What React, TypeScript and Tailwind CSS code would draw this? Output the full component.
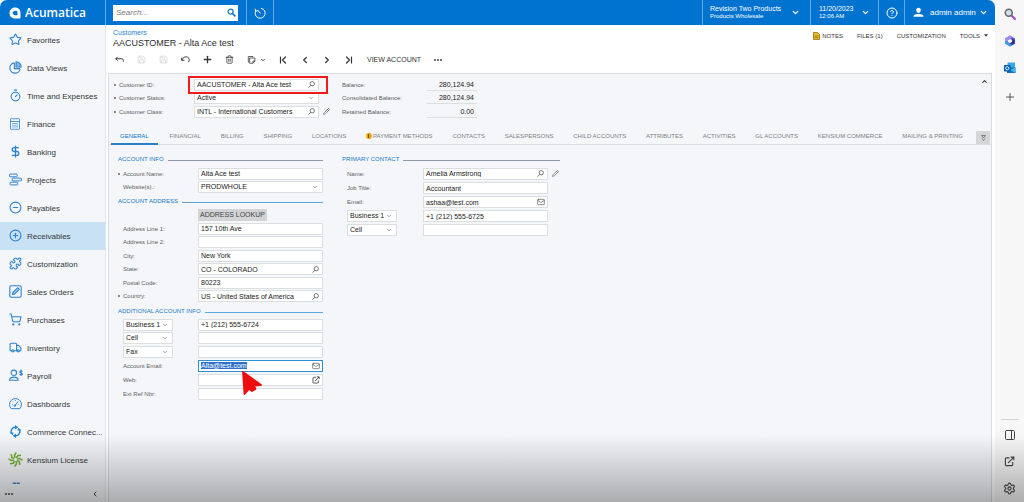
import { useEffect, useRef, type ReactNode } from 'react';
import {
  CircleMinus,
  CirclePlus,
  ChevronDown,
  ChevronLeft,
  ChevronRight,
  ChevronUp,
  ChevronFirst,
  ChevronLast,
  CircleHelp,
  DollarSign,
  Mail,
  PanelRight,
  Pencil,
  Plus,
  Puzzle,
  Save,
  Settings,
  ShoppingCart,
  Star,
  Timer,
  Trash2,
  Truck,
} from 'lucide-react';

function ProjectsIcon() {
  return (
    <svg viewBox="0 0 24 24" className="size-[13px]" fill="none" stroke="currentColor" strokeWidth="1.800">
      <rect x="1" y="2" width="14" height="5" rx="1" />
      <rect x="6" y="9.500" width="17" height="5" rx="1" />
      <rect x="2" y="17" width="14" height="5" rx="1" />
    </svg>
  );
}

function PieIcon() {
  return (
    <svg viewBox="0 0 24 24" className="size-[13px]" fill="none" stroke="currentColor" strokeWidth="2">
      <path d="M10 3.500a9.500 9.500 0 1 0 10.500 11" />
      <path d="M13 1.500a9.500 9.500 0 0 1 9.500 9.500H13z" fill="currentColor" fillOpacity=".55" />
      <path d="M10 3.500V14h10.500" />
    </svg>
  );
}

function SalesIcon() {
  return (
    <svg viewBox="0 0 24 24" className="size-[13px]" fill="none" stroke="currentColor" strokeWidth="2">
      <rect x="1.500" y="1.500" width="21" height="21" rx="2.500" />
      <path d="M6.500 17.500l1-4L16 5l3 3-8.500 8.500z" fill="currentColor" fillOpacity=".35" />
    </svg>
  );
}

function DashboardIcon() {
  return (
    <svg viewBox="0 0 24 24" className="size-[13px]" fill="none" stroke="currentColor" strokeWidth="1.800">
      <path d="M4 21.500a11 11 0 1 1 16 0z" />
      <path d="M10.500 16.500L17 8M5.500 14h1.500M7.500 8.500l1 1M12 6v1.500M17.500 14H19" />
      <circle cx="10.800" cy="16" r="1.500" />
    </svg>
  );
}

function PayrollIcon() {
  return (
    <svg viewBox="0 0 26 24" className="h-[13px] w-[14px]" fill="none" stroke="currentColor" strokeWidth="1.900">
      <circle cx="9" cy="7" r="5" />
      <path d="M1 21c0-4 3-6 8-6s8 2 8 6z" />
      <path d="M25 4.500c-1-1.200-5-1.500-5 .8 0 2.500 5 1.300 5 4 0 2.200-4 2.200-5.300.7M22.500 1v12" />
    </svg>
  );
}

function SyncIcon() {
  return (
    <svg viewBox="0 0 24 24" className="size-[13px] text-[#1f82d6]" fill="none" stroke="currentColor" strokeWidth="2.600">
      <path d="M4.500 15.500A8.300 8.300 0 0 1 12 4" />
      <path d="M19.500 8.500A8.300 8.300 0 0 1 12 20" />
      <path d="M11 0l6 4-6 4.500zM13 24l-6-4 6-4.500z" fill="currentColor" stroke="none" />
      <path d="M1.500 14h7l-2 5zM22.500 10h-7l2-5z" fill="currentColor" stroke="none" />
    </svg>
  );
}

function KensiumIcon() {
  const blades = [0, 45, 90, 135, 180, 225, 270, 315];
  return (
    <svg viewBox="0 0 28 28" className="-ml-px size-[15px] text-[#6fae2d]" fill="none" stroke="currentColor" strokeWidth="2.800">
      {blades.map((angle) => (
        <path key={angle} d="M13 11l-1-5 3.500-5" transform={`rotate(${angle} 14 14)`} />
      ))}
    </svg>
  );
}

function BarIcon() {
  return (
    <svg viewBox="0 0 24 24" className="size-[13px]" fill="currentColor">
      <path d="M7 10h6v3H7zM14 10h6v3h-6z" />
    </svg>
  );
}

function FinanceIcon() {
  return (
    <svg viewBox="0 0 24 24" className="size-[12px]" fill="none" stroke="currentColor" strokeWidth="1.600">
      <rect x="3" y="1.500" width="18" height="21" rx="1" />
      <path d="M3 7h18" />
      <path d="M8 10v10M12 10v10M16 10v10" strokeDasharray="2 1.600" strokeWidth="2.200" />
    </svg>
  );
}

function Logo() {
  return (
    <svg viewBox="0 0 24 24" className="size-[12px]" aria-hidden="true">
      <path
        fill="#fff"
        fillRule="evenodd"
        d="M12 1c7 0 11 4.500 11 11v9c0 1.500-.6 2-2 2h-9C5 23 1 18 1 12S5.500 1 12 1zm1 6.500c-3.600 0-5.500 2-5.500 4.500s1.800 4.500 4.500 4.500h5V11c0-2.300-1.300-3.500-4-3.500z"
      />
    </svg>
  );
}

const ic = 'size-[13px]';
const navItems: { label: string; icon: ReactNode }[] = [
  { label: 'Favorites', icon: <Star className={ic} strokeWidth={2} /> },
  { label: 'Data Views', icon: <PieIcon /> },
  { label: 'Time and Expenses', icon: <Timer className={ic} strokeWidth={2} /> },
  { label: 'Finance', icon: <FinanceIcon /> },
  { label: 'Banking', icon: <DollarSign className={ic} strokeWidth={2.4} /> },
  { label: 'Projects', icon: <ProjectsIcon /> },
  { label: 'Payables', icon: <CircleMinus className={ic} strokeWidth={2} /> },
  { label: 'Receivables', icon: <CirclePlus className={ic} strokeWidth={2} /> },
  { label: 'Customization', icon: <Puzzle className={ic} strokeWidth={2} /> },
  { label: 'Sales Orders', icon: <SalesIcon /> },
  { label: 'Purchases', icon: <ShoppingCart className={ic} strokeWidth={2} /> },
  { label: 'Inventory', icon: <Truck className={ic} strokeWidth={2} /> },
  { label: 'Payroll', icon: <PayrollIcon /> },
  { label: 'Dashboards', icon: <DashboardIcon /> },
  { label: 'Commerce Connec...', icon: <SyncIcon /> },
  { label: 'Kensium License', icon: <KensiumIcon /> },
];

const tabs = [
  'GENERAL',
  'FINANCIAL',
  'BILLING',
  'SHIPPING',
  'LOCATIONS',
  'PAYMENT METHODS',
  'CONTACTS',
  'SALESPERSONS',
  'CHILD ACCOUNTS',
  'ATTRIBUTES',
  'ACTIVITIES',
  'GL ACCOUNTS',
  'KENSIUM COMMERCE',
  'MAILING & PRINTING',
];

function Lookup() {
  return (
    <svg viewBox="0 0 14 14" className="mr-px size-[7px] shrink-0" fill="none" stroke="#555" strokeWidth="1.600">
      <circle cx="8.500" cy="5.500" r="4.300" />
      <path d="M5.500 8.800L1 13.300" />
    </svg>
  );
}

function OpenIcon({ className }: { className: string }) {
  return (
    <svg viewBox="0 0 24 24" className={className} fill="none" stroke="currentColor" strokeWidth="2.400">
      <path d="M12 4H5a2 2 0 0 0-2 2v13a2 2 0 0 0 2 2h12a2 2 0 0 0 2-2v-6" />
      <path d="M9 15L21 3M14.500 2.500h7v7" />
    </svg>
  );
}

function TextBox({ id, value = '', icon, label }: { id: string; value?: string; icon?: ReactNode; label?: string }) {
  return (
    <div className="flex h-[12px] w-[125px] items-center border border-[#dcdfe2] bg-white pr-[2px] focus-within:border-[#2f8fd3]">
      <input
        id={id}
        aria-label={label}
        defaultValue={value}
        className="h-full min-w-0 flex-1 bg-transparent pl-[2px] text-[7px] leading-[10px] text-[#222] outline-none"
      />
      {icon}
    </div>
  );
}

function DropDown({ id, value, narrow, label }: { id: string; value: string; narrow?: boolean; label?: string }) {
  return (
    <div className={`grid h-[12px] items-center border border-[#dcdfe2] bg-white ${narrow ? 'w-[50px]' : 'w-[125px]'}`}>
      <select
        id={id}
        aria-label={label}
        className="col-start-1 row-start-1 h-[10px] w-full appearance-none bg-transparent pl-[2px] text-[7px] leading-[10px] text-[#222] outline-none"
      >
        <option>{value}</option>
      </select>
      <ChevronDown
        className="pointer-events-none col-start-1 row-start-1 mr-[4px] size-[6px] justify-self-end text-[#666]"
        strokeWidth={2.5}
      />
    </div>
  );
}

function Label({ id, text, required, wide }: { id: string; text: string; required?: boolean; wide?: boolean }) {
  return (
    <label
      htmlFor={id}
      className={`flex shrink-0 items-center whitespace-nowrap text-[#5c6064] ${wide ? 'w-[81px]' : 'w-[80px]'}`}
    >
      <span className="w-[5px] shrink-0">
        {required && <span className="block size-[2px] rounded-full bg-[#666]" />}
      </span>
      {text}
    </label>
  );
}

function Row({ children, even }: { children: ReactNode; even?: boolean }) {
  return (
    <div className={`flex items-center ${even ? 'h-[14px] first:h-[15px]' : 'h-[13px] even:h-[14px]'}`}>{children}</div>
  );
}

function Heading({ text, grey }: { text: string; grey?: boolean }) {
  return (
    <h2 className="flex h-[13px] items-center gap-[4px] whitespace-nowrap text-[#1779c9]">
      {text}
      <span className={`mt-[3px] h-px flex-1 ${grey ? 'bg-[#8f9aa5]' : 'bg-[#5aa7dd]'}`} />
    </h2>
  );
}

function Tool({ label, children }: { label: string; children: ReactNode }) {
  return (
    <button aria-label={label} className="flex w-[22px] items-center justify-center">
      {children}
    </button>
  );
}

function Dots() {
  return (
    <>
      <span className="size-[2px] rounded-full bg-[#444]" />
      <span className="size-[2px] rounded-full bg-[#444]" />
      <span className="size-[2px] rounded-full bg-[#444]" />
    </>
  );
}

function Header() {
  return (
    <header className="flex h-[25px] shrink-0 items-stretch rounded-t-[7px] bg-[#0073d1] text-white">
      <a href="#home" className="flex w-[106px] items-center gap-[4px] border-r border-[#62aae4] pl-[9px]">
        <Logo />
        <span className="font-['Open_Sans'] text-[12px] leading-none font-semibold">Acumatica</span>
      </a>
      <div className="flex w-[141px] items-center border-r border-[#62aae4] pl-[7px]">
        <div className="flex h-[16px] w-[125px] items-center bg-white pr-[2px]">
          <input
            aria-label="Search"
            placeholder="Search..."
            className="min-w-0 flex-1 pl-[3px] text-[8px] text-[#333] italic outline-none placeholder:text-[#777]"
          />
          <svg viewBox="0 0 20 20" className="size-[9px]" fill="none" stroke="#1b78cc">
            <circle cx="8" cy="8" r="5.500" strokeWidth="2.800" />
            <path d="M12 12l6.500 6.500" strokeWidth="4" />
          </svg>
        </div>
      </div>
      <button aria-label="Recent" className="flex w-[27px] items-center justify-center border-r border-[#62aae4]">
        <svg viewBox="0 0 24 24" className="size-[12px]" fill="none" stroke="currentColor" strokeWidth="2">
          <path d="M14 2.500A10 10 0 1 1 3.500 7.500" />
          <path d="M13 13L8 7" />
          <path d="M2 3.500l1.500 5 5-1.500" />
        </svg>
      </button>
      <div className="flex-1" />
      <button className="flex w-[108px] items-center justify-between border-l border-[#62aae4] pr-[10px] pl-[7px] text-left">
        <span>
          <span className="block text-[7px] leading-[8px]">Revision Two Products</span>
          <span className="block text-[6px] leading-[7px]">Products Wholesale</span>
        </span>
        <ChevronDown className="size-[9px]" strokeWidth={3.5} />
      </button>
      <button className="flex w-[68px] items-center justify-between border-l border-[#62aae4] pr-[8px] pl-[8px] text-left">
        <span>
          <span className="block text-[7px] leading-[8px]">11/20/2023</span>
          <span className="block text-[6px] leading-[7px]">12:06 AM</span>
        </span>
        <ChevronDown className="size-[9px]" strokeWidth={3.5} />
      </button>
      <button aria-label="Help" className="flex w-[27px] items-center justify-center border-x border-[#62aae4]">
        <CircleHelp className="size-[12px]" strokeWidth={2} />
      </button>
      <button className="flex w-[90px] items-center pl-[8px] text-[8px]">
        <svg viewBox="0 0 24 24" className="size-[11px]" fill="currentColor">
          <path d="M12 1.500c3.500 0 5 2.300 5 5.200 0 3.300-2 6.300-5 6.300S7 10 7 6.700c0-2.900 1.500-5.200 5-5.200z" />
          <path d="M1 21.500c0-4 2-5.500 8-6.500h6c6 1 8 2.500 8 6.500z" />
        </svg>
        <span className="ml-[6px] flex-1 text-left whitespace-nowrap">admin admin</span>
        <ChevronDown className="mr-[7px] size-[9px]" strokeWidth={3.5} />
      </button>
    </header>
  );
}

function Nav() {
  return (
    <nav className="flex w-[105px] shrink-0 flex-col bg-[#f4f6f9]">
      <ul className="min-h-0 flex-1 overflow-hidden pt-px">
        {navItems.map(({ label, icon }) => (
          <li key={label}>
            <a
              href="#module"
              className={`flex h-[28px] items-center pl-[9px] text-[8px] text-[#33363a] ${
                label === 'Receivables' ? 'bg-[#c8e1f5]' : ''
              }`}
            >
              <span className="flex w-[18px] shrink-0 pb-px text-[#2a82d0]">{icon}</span>
              <span className="pt-[2px] whitespace-nowrap">{label}</span>
            </a>
          </li>
        ))}
        <li className="flex h-[28px] items-start pt-[3px] pl-[9px] text-[#3388d2]">
          <BarIcon />
        </li>
      </ul>
      <div className="flex h-[17px] shrink-0 items-center justify-between pr-[6px] pl-[5px] text-[#444]">
        <button aria-label="More items" className="flex gap-px">
          <Dots />
        </button>
        <button aria-label="Collapse menu">
          <ChevronLeft className="size-[8px]" strokeWidth={3} />
        </button>
      </div>
    </nav>
  );
}

function TitleBar() {
  return (
    <div className="flex h-[48px] shrink-0 justify-between bg-white text-[#333]">
      <div>
        <div className="pl-[7px]">
          <a href="#customers" className="block pt-[4px] text-[7px] leading-[8px] text-[#2a86cf]">
            Customers
          </a>
          <h1 className="text-[9px] leading-[13px] whitespace-nowrap text-[#2b2d30]">AACUSTOMER - Alta Ace test</h1>
        </div>
        <div className="flex h-[19px] items-center pl-[2px]">
          <Tool label="Back">
            <svg viewBox="0 0 24 24" className="size-[9px]" fill="none" stroke="currentColor" strokeWidth="2.600">
              <path d="M7 5L2 10l5 5M2 10h16c3 0 4 1.500 4 4v4" />
            </svg>
          </Tool>
          <Tool label="Save and close">
            <Save className="size-[9px] text-[#d3d3d3]" strokeWidth={2} />
          </Tool>
          <Tool label="Save">
            <Save className="size-[9px] text-[#d3d3d3]" strokeWidth={2} />
          </Tool>
          <Tool label="Undo">
            <svg viewBox="0 0 24 24" className="size-[9px]" fill="none" stroke="currentColor" strokeWidth="2.600">
              <path d="M2 7v7h7" />
              <path d="M2 14C5 6 12 3 18 6c5 3 5 9 2 13" />
            </svg>
          </Tool>
          <Tool label="Add">
            <Plus className="size-[11px]" strokeWidth={2.8} />
          </Tool>
          <Tool label="Delete">
            <Trash2 className="size-[9px]" strokeWidth={2} />
          </Tool>
          <button aria-label="Copy" className="flex w-[32px] items-center gap-[4px] pl-[7px]">
            <svg viewBox="0 0 24 24" className="size-[9px]" fill="none" stroke="currentColor" strokeWidth="2">
              <path d="M6 19H3.500V4H16v2" />
              <path d="M7 8h14v8l-5 6H7z" />
              <path d="M21 16h-5v6" />
            </svg>
            <ChevronDown className="size-[6px]" strokeWidth={3.5} />
          </button>
          <Tool label="First">
            <ChevronFirst className="size-[12px]" strokeWidth={2.4} />
          </Tool>
          <Tool label="Previous">
            <ChevronLeft className="size-[10px]" strokeWidth={3} />
          </Tool>
          <Tool label="Next">
            <ChevronRight className="size-[10px]" strokeWidth={3} />
          </Tool>
          <Tool label="Last">
            <ChevronLast className="size-[12px]" strokeWidth={2.4} />
          </Tool>
          <button className="ml-[7px] text-[7px] whitespace-nowrap">VIEW ACCOUNT</button>
          <button aria-label="More actions" className="ml-[13px] flex gap-px">
            <Dots />
          </button>
        </div>
      </div>
      <div className="flex h-[21px] items-center gap-[14px] pr-[7px] text-[6px] whitespace-nowrap">
        <button className="flex items-center gap-[2px]">
          <svg viewBox="0 0 14 16" className="h-[8px] w-[7px]">
            <path d="M1 1h8l4 4v10H1z" fill="#f0b81c" stroke="#8a6d1a" strokeWidth="1.500" />
            <path d="M3 8h8M3 11h8" stroke="#8a6d1a" strokeWidth="1.300" />
          </svg>
          NOTES
        </button>
        <button>FILES (1)</button>
        <button>CUSTOMIZATION</button>
        <button className="flex items-center gap-[4px]">
          TOOLS
          <svg viewBox="0 0 6 4" className="h-[3px] w-[4px]">
            <path d="M0 0h6L3 4z" fill="#333" />
          </svg>
        </button>
      </div>
    </div>
  );
}

function Summary() {
  return (
    <div className="flex items-start pt-[4px] pl-[5px]">
      <div className="flex flex-col">
        <Row>
          <Label id="customer-id" text="Customer ID:" required />
          <div className="relative">
            <TextBox id="customer-id" value="AACUSTOMER - Alta Ace test" icon={<Lookup />} />
            <div className="pointer-events-none absolute -inset-y-[3px] -right-[9px] -left-[6px] border-2 border-[#ee1c1c]" />
          </div>
        </Row>
        <Row>
          <Label id="customer-status" text="Customer Status:" required />
          <DropDown id="customer-status" value="Active" />
        </Row>
        <Row>
          <Label id="customer-class" text="Customer Class:" required />
          <TextBox id="customer-class" value="INTL - International Customers" icon={<Lookup />} />
          <button aria-label="Edit customer class" className="ml-[4px]">
            <Pencil className="size-[7px] text-[#666]" strokeWidth={2.4} />
          </button>
        </Row>
      </div>
      <dl className="ml-[12px] text-[#5c6064]">
        {[
          ['Balance:', '280,124.94'],
          ['Consolidated Balance:', '280,124.94'],
          ['Retained Balance:', '0.00'],
        ].map(([name, amount]) => (
          <Row key={name}>
            <dt className="w-[85px] whitespace-nowrap">{name}</dt>
            <dd className="h-[12px] w-[50px] border-b border-[#dcdfe2] pr-[3px] text-right text-[7px] leading-[12px] text-[#222]">
              {amount}
            </dd>
          </Row>
        ))}
      </dl>
      <button aria-label="Collapse summary" className="mr-[3px] ml-auto">
        <ChevronUp className="size-[7px] text-[#333]" strokeWidth={3.5} />
      </button>
    </div>
  );
}

function Tabs() {
  return (
    <div className="mt-[9px] flex h-[18px] shrink-0 items-stretch border-b border-[#d9dde1] pl-[2px]">
      <div role="tablist" className="flex flex-1 justify-between">
        {tabs.map((tab, i) => (
          <button
            key={tab}
            role="tab"
            aria-selected={i === 0}
            className={`-mb-px flex items-center border-b-2 whitespace-nowrap ${
              i === 0 ? '-mr-[8px] border-[#2a7fc4] px-[9px] pt-px text-[#0f76c8]' : 'border-transparent pt-px text-[#7d8186]'
            }`}
          >
            {tab === 'PAYMENT METHODS' && (
              <span className="mr-px flex size-[6px] items-center justify-center rounded-full bg-[#f5a800]">
                <span className="h-[4px] w-px bg-[#6b4a00]" />
              </span>
            )}
            {tab}
          </button>
        ))}
      </div>
      <button
        aria-label="Filter tabs"
        className="mt-[4px] mr-px ml-[13px] flex w-[14px] items-center justify-center bg-[#d4d6d8] text-[#666]"
      >
        <svg viewBox="0 0 10 12" className="h-[6px] w-[5px]" fill="none" stroke="currentColor" strokeWidth="1.600">
          <path d="M1 1h8L5 6zM2 7l3 4 3-4" />
        </svg>
      </button>
    </div>
  );
}

function Cursor() {
  return (
    <svg viewBox="0 0 22 26" className="pointer-events-none absolute top-[10px] left-[43px] z-10 h-[26px] w-[22px]">
      <path
        d="M2 2L20 15L13 15.500L14.500 19L11 21L8 19L3.500 24Z"
        fill="#ee0e0e"
        stroke="#ee0e0e"
        strokeWidth="1.800"
        strokeLinejoin="round"
      />
    </svg>
  );
}

function General() {
  const emailBox = useRef<HTMLDivElement>(null);
  useEffect(() => {
    const input = emailBox.current?.querySelector('input');
    input?.focus();
    input?.select();
  }, []);
  return (
    <div className="flex flex-1 items-start gap-[19px] pt-[7px] pl-[9px]">
      <div className="w-[205px]">
        <Heading text="ACCOUNT INFO" grey />
        <div className="pt-[2px]">
          <Row>
            <Label id="account-name" text="Account Name:" required />
            <TextBox id="account-name" value="Alta Ace test" />
          </Row>
          <Row>
            <Label id="website" text="Website(s).:" />
            <DropDown id="website" value="PRODWHOLE" />
          </Row>
        </div>
        <Heading text="ACCOUNT ADDRESS" />
        <button className="mt-[2px] mb-px ml-[80px] block h-[12px] bg-[#d3d4d6] px-[2px] text-[7px] leading-[12px] text-[#444]">
          ADDRESS LOOKUP
        </button>
        <div>
          <Row>
            <Label id="line-1" text="Address Line 1:" />
            <TextBox id="line-1" value="157 10th Ave" />
          </Row>
          <Row>
            <Label id="line-2" text="Address Line 2:" />
            <TextBox id="line-2" />
          </Row>
          <Row>
            <Label id="city" text="City:" />
            <TextBox id="city" value="New York" />
          </Row>
          <Row>
            <Label id="state" text="State:" />
            <TextBox id="state" value="CO - COLORADO" icon={<Lookup />} />
          </Row>
          <Row>
            <Label id="postal" text="Postal Code:" />
            <TextBox id="postal" value="80223" />
          </Row>
          <Row>
            <Label id="country" text="Country:" required />
            <TextBox id="country" value="US - United States of America" icon={<Lookup />} />
          </Row>
        </div>
        <div className="pt-px">
          <Heading text="ADDITIONAL ACCOUNT INFO" />
        </div>
        <div className="pt-px">
          {[
            ['Business 1', '+1 (212) 555-6724'],
            ['Cell', ''],
            ['Fax', ''],
          ].map(([kind, phone]) => (
            <Row key={kind}>
              <div className="w-[80px] pl-[5px]">
                <DropDown id={`account-${kind}`} value={kind} label={`${kind} phone type`} narrow />
              </div>
              <TextBox id={`account-${kind}-number`} value={phone} label={`${kind} number`} />
            </Row>
          ))}
        </div>
        <div>
          <Row even>
            <Label id="account-email" text="Account Email:" />
            <div ref={emailBox} className="relative selection:bg-[#2f6fcb] selection:text-white">
              <TextBox
                id="account-email"
                value="Alta@test.com"
                icon={<Mail className="size-[8px] text-[#555]" strokeWidth={2} />}
              />
              <Cursor />
            </div>
          </Row>
          <Row even>
            <Label id="web" text="Web:" />
            <TextBox id="web" icon={<OpenIcon className="size-[8px] text-[#333]" />} />
          </Row>
          <Row even>
            <Label id="ext-ref" text="Ext Ref Nbr:" />
            <TextBox id="ext-ref" />
          </Row>
        </div>
      </div>
      <div className="w-[218px]">
        <Heading text="PRIMARY CONTACT" grey />
        <div className="pt-px">
          <Row even>
            <Label id="contact-name" text="Name:" wide />
            <TextBox id="contact-name" value="Amelia Armstrong" icon={<Lookup />} />
            <button aria-label="Edit contact" className="ml-[4px]">
              <Pencil className="size-[7px] text-[#666]" strokeWidth={2.4} />
            </button>
          </Row>
          <Row even>
            <Label id="job" text="Job Title:" wide />
            <TextBox id="job" value="Accountant" />
          </Row>
          <Row even>
            <Label id="email" text="Email:" wide />
            <TextBox
              id="email"
              value="ashaa@test.com"
              icon={<Mail className="size-[8px] text-[#555]" strokeWidth={2} />}
            />
          </Row>
          {[
            ['Business 1', '+1 (212) 555-6725'],
            ['Cell', ''],
          ].map(([kind, phone]) => (
            <Row key={kind} even>
              <div className="w-[81px] pl-[5px]">
                <DropDown id={`contact-${kind}`} value={kind} label={`Contact ${kind} phone type`} narrow />
              </div>
              <TextBox id={`contact-${kind}-number`} value={phone} label={`Contact ${kind} number`} />
            </Row>
          ))}
        </div>
      </div>
    </div>
  );
}

function Rail() {
  return (
    <aside className="flex w-[29px] shrink-0 flex-col items-center bg-[#f7f7f8] pt-[8px] pb-[7px] text-[#555]">
      <div className="flex flex-col items-center gap-[15px]">
        <button aria-label="Search">
          <svg viewBox="0 0 24 24" className="size-[12px]" fill="none">
            <path d="M14 14l8 8" stroke="#9b4fd0" strokeWidth="4" strokeLinecap="round" />
            <circle cx="9.500" cy="9.500" r="7" stroke="#666" strokeWidth="3" fill="#cfe3ee" />
          </svg>
        </button>
        <button aria-label="Microsoft 365">
          <svg viewBox="0 0 24 24" className="size-[12px]">
            <path
              fillRule="evenodd"
              d="M12 1l10 6v10l-10 6-10-6V7zm0 7l-4 2.200v4L12 16.500l4-2.300v-4z"
              fill="#5b5fe0"
            />
            <path d="M12 1L2 7v7l6-1v-3l7-4V2.500z" fill="#a88be8" />
            <path d="M2 12v5l10 6 4-2.500-8-5.500v-3z" fill="#3d9be8" />
            <path d="M16 10.200V7l6 3v7l-6 3.500-4-4 4-2.300z" fill="#3436a0" />
          </svg>
        </button>
        <button aria-label="Outlook">
          <svg viewBox="0 0 24 24" className="size-[12px]">
            <path d="M7 1h15v12H7z" fill="#35a7ea" />
            <path d="M6 11h17v11H6z" fill="#1470c4" />
            <path d="M23 11v11L12 16z" fill="#41b8f2" />
            <rect x="0" y="6" width="13" height="13" rx="1.500" fill="#0a5eb0" />
            <circle cx="6.500" cy="12.500" r="3.200" fill="none" stroke="#fff" strokeWidth="1.800" />
          </svg>
        </button>
        <button aria-label="Add to sidebar" className="mt-[2px]">
          <Plus className="size-[12px]" strokeWidth={2} />
        </button>
      </div>
      <div className="mt-auto flex flex-col items-center gap-[15px] text-[#444]">
        <div className="-mb-[6px] h-px w-[18px] bg-[#d5d5d5]" />
        <button aria-label="Toggle panel">
          <PanelRight className="size-[12px]" strokeWidth={2} />
        </button>
        <button aria-label="Open externally">
          <OpenIcon className="size-[11px]" />
        </button>
        <button aria-label="Settings">
          <Settings className="size-[13px]" strokeWidth={2} />
        </button>
      </div>
    </aside>
  );
}

export default function App() {
  return (
    <div className="relative flex h-screen min-h-[440px] bg-[#f7f7f8] font-['Liberation_Sans',Arial,sans-serif] text-[6px] leading-[10px] [&_button]:cursor-pointer">
      <div className="flex min-w-0 flex-1 flex-col">
        <Header />
        <div className="flex min-h-0 flex-1">
          <Nav />
          <main className="flex min-w-0 flex-1 flex-col border-l border-[#e3e6e9] bg-white">
            <TitleBar />
            <section className="mr-[3px] ml-[2px] flex min-h-0 flex-1 flex-col border-x border-t border-[#d9dde1] bg-[#f4f6f9]">
              <Summary />
              <Tabs />
              <General />
            </section>
          </main>
        </div>
      </div>
      <Rail />
      <div className="pointer-events-none absolute inset-x-0 bottom-0 h-[68px] bg-linear-to-b from-black/0 to-black/30" />
    </div>
  );
}
